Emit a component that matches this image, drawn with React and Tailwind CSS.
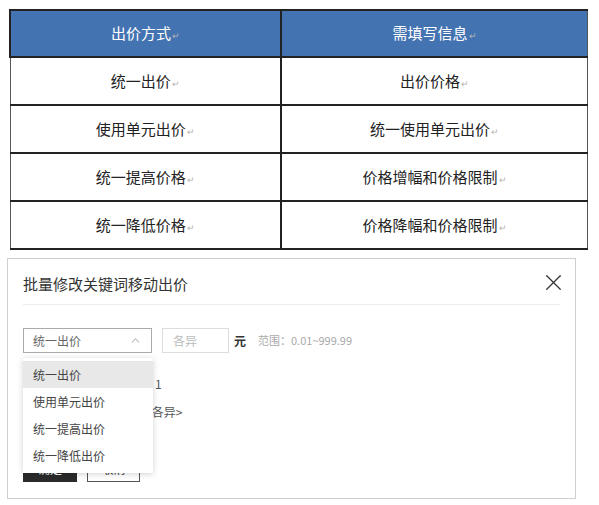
import { X, ChevronUp } from 'lucide-react';

const rows = [
  ['统一出价', '出价价格'],
  ['使用单元出价', '统一使用单元出价'],
  ['统一提高价格', '价格增幅和价格限制'],
  ['统一降低价格', '价格降幅和价格限制'],
];

const options = ['统一出价', '使用单元出价', '统一提高出价', '统一降低出价'];

function Mark() {
  return <span className="text-[9px] text-[#b5b5b5] ml-px">↵</span>;
}

export default function App() {
  return (
    <div
      className="w-[599px] h-[505px] bg-white overflow-hidden"
      style={{ fontFamily: '"Microsoft YaHei", "Noto Sans CJK SC", sans-serif' }}
    >
      {/* Reference table */}
      <table className="ml-[9px] mt-[9px] w-[579px] border-collapse text-[15px] text-[#222]">
        <thead>
          <tr className="h-[47px] bg-[#4473b1] text-white">
            <th className="w-[271px] border-2 border-[#222] font-normal">出价方式<Mark /></th>
            <th className="border-2 border-[#222] border-r-[#555] border-r font-normal">需填写信息<Mark /></th>
          </tr>
        </thead>
        <tbody>
          {rows.map(([a, b]) => (
            <tr key={a} className="h-[48px]">
              <td className="border-2 border-[#222] border-l border-l-[#555] text-center">{a}<Mark /></td>
              <td className="border-2 border-[#222] border-r border-r-[#555] text-center">{b}<Mark /></td>
            </tr>
          ))}
        </tbody>
      </table>

      {/* Modal */}
      <div className="ml-[7px] mt-[8px] w-[569px] h-[241px] border border-[#cfcfcf] px-[15px] flex flex-col">
        <div className="h-[46px] flex items-center justify-between border-b border-[#ececec] pt-[6px]">
          <span className="text-[15px] text-[#333]">批量修改关键词移动出价</span>
          <X className="w-[27px] h-[27px] text-[#333] mr-[-7px] -mt-[4px]" strokeWidth={1.1} />
        </div>

        <div className="relative mt-[23px] flex items-center gap-[10px] text-[12px]">
          <div className="w-[129px] h-[25px] border border-[#aaa] flex items-center justify-between px-[9px] text-[#666]">
            <span>统一出价</span>
            <ChevronUp className="w-[13px] h-[13px] text-[#888]" strokeWidth={1.5} />
          </div>
          <div className="w-[67px] h-[25px] border border-[#ddd] flex items-center px-[10px] text-[#bbb]">各异</div>
          <span className="-ml-[5px] font-bold text-[#333]">元</span>
          <span className="ml-[2px] text-[11px] text-[#aaa]">范围：0.01~999.99</span>

          {/* Open dropdown */}
          <div className="absolute left-0 top-[30px] w-[130px] bg-white shadow-[0_1px_6px_rgba(0,0,0,0.18)] z-10 flex flex-col pt-[3px] pb-[4px] text-[12px] text-[#444]">
            {options.map((o, i) => (
              <div key={o} className={`h-[27px] flex items-center px-[10px] ${i === 0 ? 'bg-[#e8e8e8]' : ''}`}>
                {o}
              </div>
            ))}
          </div>
        </div>

        <div className="mt-[22px] flex flex-col gap-[10px] text-[12px] text-[#555]">
          <div className="flex items-center h-[18px]">
            <span className="w-[132px]">已选关键词数量：</span>
            <span>1</span>
          </div>
          <div className="flex items-center h-[18px]">
            <span className="w-[122px]">当前出价：</span>
            <span>&lt;各异&gt;</span>
          </div>
        </div>

        <div className="mt-auto mb-[16px] flex gap-[10px] text-[12px]">
          <button className="w-[54px] h-[26px] bg-[#2b2b2b] text-white">确定</button>
          <button className="w-[53px] h-[26px] border border-[#555] text-[#333] bg-white">取消</button>
        </div>
      </div>
    </div>
  );
}
